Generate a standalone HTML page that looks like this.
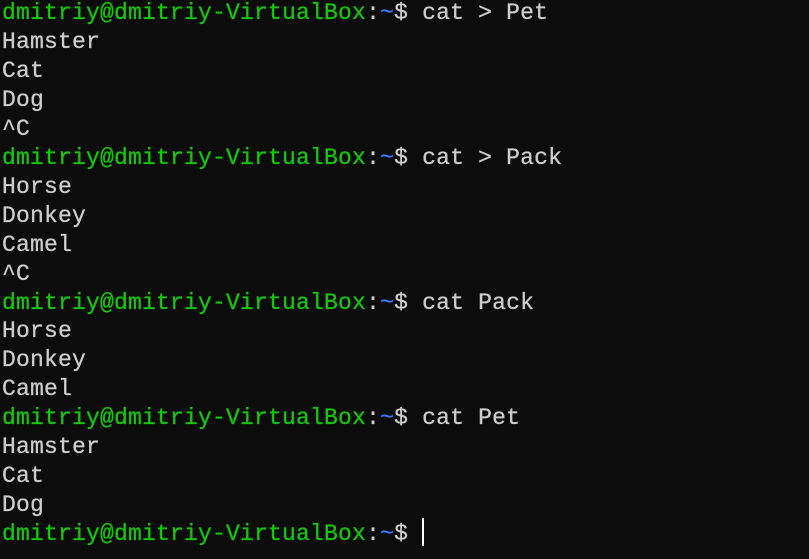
<html><head><style>
body{margin:0;background:#0c0c0c;width:809px;height:559px;overflow:hidden}
pre{margin:0;position:absolute;left:2px;top:-1px;font-family:"Liberation Mono",monospace;font-size:23px;letter-spacing:0.2px;line-height:28.95px;color:#cccccc;-webkit-text-stroke:0.3px currentColor}
.g{color:#16c60c}.b{color:#3b78ff}
.c{position:absolute;left:422px;top:518px;width:2px;height:28px;background:#fff}
</style></head><body><pre><span class="g">dmitriy@dmitriy-VirtualBox</span>:<span class="b">~</span>$ cat &gt; Pet
Hamster
Cat
Dog
^C
<span class="g">dmitriy@dmitriy-VirtualBox</span>:<span class="b">~</span>$ cat &gt; Pack
Horse
Donkey
Camel
^C
<span class="g">dmitriy@dmitriy-VirtualBox</span>:<span class="b">~</span>$ cat Pack
Horse
Donkey
Camel
<span class="g">dmitriy@dmitriy-VirtualBox</span>:<span class="b">~</span>$ cat Pet
Hamster
Cat
Dog
<span class="g">dmitriy@dmitriy-VirtualBox</span>:<span class="b">~</span>$ </pre><div class="c"></div></body></html>
